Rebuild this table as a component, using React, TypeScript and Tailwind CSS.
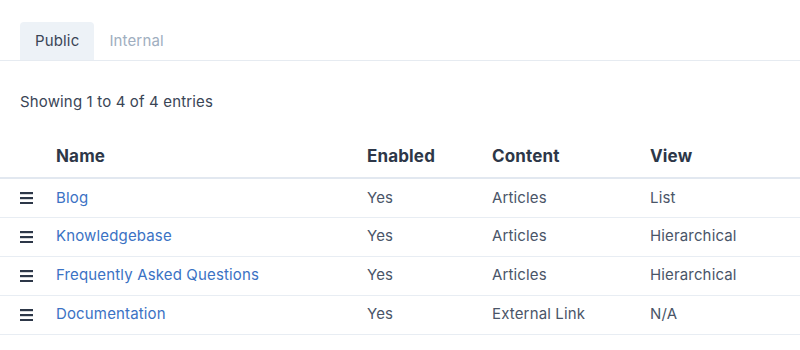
import React from "react";

type Row = { name: string; enabled: string; content: string; view: string };

const rows: Row[] = [
  { name: "Blog", enabled: "Yes", content: "Articles", view: "List" },
  { name: "Knowledgebase", enabled: "Yes", content: "Articles", view: "Hierarchical" },
  { name: "Frequently Asked Questions", enabled: "Yes", content: "Articles", view: "Hierarchical" },
  { name: "Documentation", enabled: "Yes", content: "External Link", view: "N/A" },
];

function DragHandle() {
  return (
    <svg width="14" height="12" viewBox="0 0 14 12" className="block">
      <rect x="0" y="0" width="13" height="2.2" fill="#2d3748" />
      <rect x="0" y="5" width="13" height="2.2" fill="#2d3748" />
      <rect x="0" y="10" width="13" height="2.2" fill="#2d3748" />
    </svg>
  );
}

export default function App() {
  return (
    <div
      className="w-[800px] h-[350px] bg-white overflow-hidden"
      style={{ fontFamily: "Inter, 'Noto Sans', sans-serif" }}
    >
      <div className="flex px-5 pt-[22px] border-b border-[#e6ebf1]">
        <div className="h-[38px] px-[15px] flex items-center rounded-t-[4px] bg-[#edf2f7] text-[15px] tracking-[0.01em] text-[#3a4556]">
          Public
        </div>
        <div className="h-[38px] px-[15px] flex items-center text-[15px] tracking-[0.01em] text-[#a0aec0]">
          Internal
        </div>
      </div>

      <div className="px-5 pt-[31px] text-[15px] tracking-[0.01em] text-[#3a4556] leading-[20px]">
        Showing 1 to 4 of 4 entries
      </div>

      <table className="w-full mt-[24px] border-collapse text-[15px] tracking-[0.01em]">
        <thead>
          <tr className="border-b-2 border-[#e2e8f0] h-[42px]">
            <th className="w-[56px]"></th>
            <th className="text-left font-bold text-[17px] text-[#2d3748] w-[311px]">Name</th>
            <th className="text-left font-bold text-[17px] text-[#2d3748] w-[125px]">Enabled</th>
            <th className="text-left font-bold text-[17px] text-[#2d3748] w-[158px]">Content</th>
            <th className="text-left font-bold text-[17px] text-[#2d3748]">View</th>
          </tr>
        </thead>
        <tbody>
          {rows.map((r) => (
            <tr key={r.name} className="border-b border-[#e8edf3] h-[39px]">
              <td className="pl-5">
                <DragHandle />
              </td>
              <td className="text-[#3b72c4]">{r.name}</td>
              <td className="text-[#4a5568]">{r.enabled}</td>
              <td className="text-[#4a5568]">{r.content}</td>
              <td className="text-[#4a5568]">{r.view}</td>
            </tr>
          ))}
        </tbody>
      </table>
    </div>
  );
}
